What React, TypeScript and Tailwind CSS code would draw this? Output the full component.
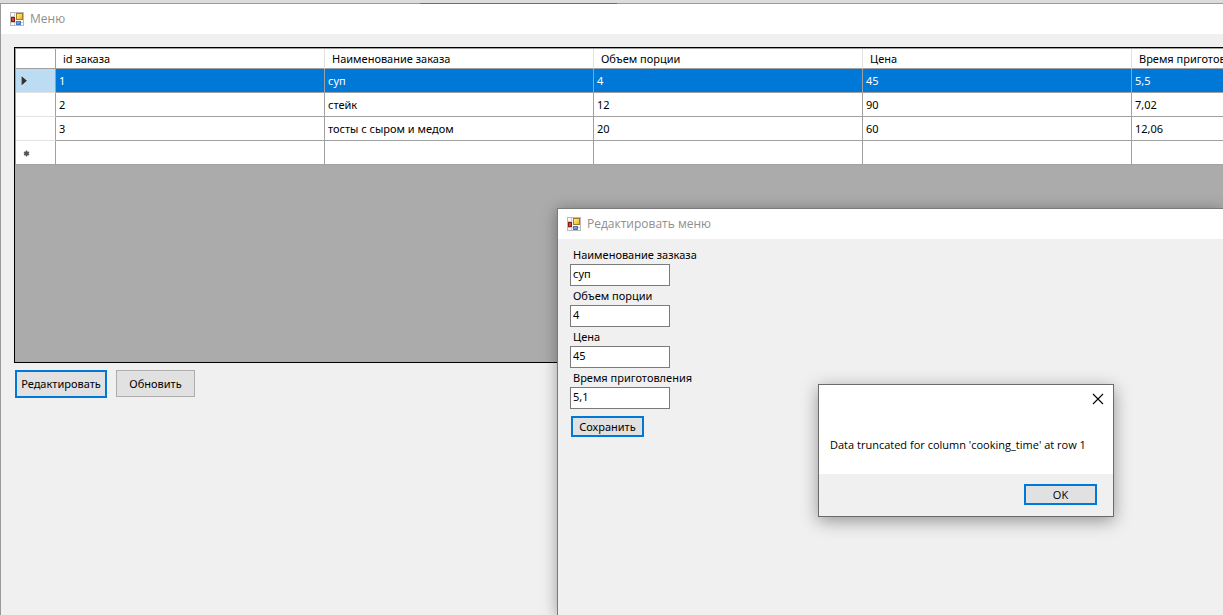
import React, { useId } from "react";

type Column = { key: string; title: string };
type Row = { id: string; name: string; portion: string; price: string; time: string };

const columns: Column[] = [
  { key: "id", title: "id заказа" },
  { key: "name", title: "Наименование заказа" },
  { key: "portion", title: "Объем порции" },
  { key: "price", title: "Цена" },
  { key: "time", title: "Время приготовления" },
];

const rows: Row[] = [
  { id: "1", name: "суп", portion: "4", price: "45", time: "5,5" },
  { id: "2", name: "стейк", portion: "12", price: "90", time: "7,02" },
  { id: "3", name: "тосты с сыром и медом", portion: "20", price: "60", time: "12,06" },
];

const fields = [
  { label: "Наименование зазказа", value: "суп" },
  { label: "Объем порции", value: "4" },
  { label: "Цена", value: "45" },
  { label: "Время приготовления", value: "5,1" },
];

function FormIcon() {
  const id = useId();
  return (
    <svg className="size-[14px] shrink-0" viewBox="0 0 14 14" aria-hidden="true">
      <defs>
        <linearGradient id={`${id}y`} x1="0" y1="0" x2="1" y2="1">
          <stop offset="0" stopColor="#fff3a8" />
          <stop offset="1" stopColor="#eab010" />
        </linearGradient>
        <linearGradient id={`${id}b`} x1="0" y1="0" x2="1" y2="1">
          <stop offset="0" stopColor="#9cc4f6" />
          <stop offset="1" stopColor="#3a72d0" />
        </linearGradient>
      </defs>
      <rect x="0.5" y="0.5" width="13" height="13" fill="#fafafa" stroke="#b9b9b9" />
      <path d="M4.500 1v12M1 4.500h4M1 10.500h12" stroke="#c8c8c8" fill="none" />
      <rect x="6.500" y="1.500" width="6" height="6" fill={`url(#${id}y)`} stroke="#a87c18" />
      <rect x="1.500" y="5.500" width="3" height="4" fill="#d8432f" stroke="#8c1a14" />
      <rect x="6.500" y="9.500" width="4" height="3" fill={`url(#${id}b)`} stroke="#4a78c0" />
    </svg>
  );
}

function TitleBar({ title }: { title: string }) {
  return (
    <header className="flex h-[30px] items-center gap-1.5 bg-white pl-[9px] font-['Open_Sans',sans-serif] text-xs text-[#8f8f8f]">
      <FormIcon />
      <h1>{title}</h1>
    </header>
  );
}

function OrdersGrid() {
  return (
    <div className="h-[316px] overflow-hidden border-y border-l border-black bg-[#ababab]">
      <table className="w-[1386px] table-fixed border-separate border-spacing-0 border-t border-l border-[#a0a0a0] bg-white text-left">
        <colgroup>
          <col className="w-[40px]" />
          {columns.map((c) => (
            <col key={c.key} className="w-[269px]" />
          ))}
        </colgroup>
        <thead>
          <tr className="h-5">
            <th className="border-r border-b border-[#a0a0a0] p-0" aria-label="Строка" />
            {columns.map((c) => (
              <th
                key={c.key}
                className="border-r border-b border-r-[#e2e2e2] border-b-[#a0a0a0] py-0 pl-[7px] font-normal"
              >
                {c.title}
              </th>
            ))}
          </tr>
        </thead>
        <tbody>
          {rows.map((row, i) => (
            <tr key={row.id} className={i === 0 ? "h-6 bg-[#0078d7] text-white" : "h-6"}>
              <th
                className={
                  i === 0
                    ? "border-r border-b border-r-[#a0a0a0] border-b-[#e2e2e2] bg-[#bcdcf4] p-0"
                    : "border-r border-b border-r-[#a0a0a0] border-b-[#e2e2e2] p-0"
                }
                aria-label={row.id}
              >
                {i === 0 && (
                  <svg className="ml-[4px] h-[11px] w-[8px]" viewBox="0 0 8 11" aria-hidden="true">
                    <path d="M1.500 1v9.500l5.500-4.750z" fill="#333" stroke="#fff" strokeWidth="1" paintOrder="stroke" />
                  </svg>
                )}
              </th>
              {[row.id, row.name, row.portion, row.price, row.time].map((v, j) => (
                <td key={columns[j].key} className="border-r border-b border-[#a0a0a0] py-0 pl-[3px]">
                  {v}
                </td>
              ))}
            </tr>
          ))}
          <tr className="h-6">
            <th className="border-r border-b border-r-[#a0a0a0] border-b-[#a0a0a0] p-0 pt-0.5" aria-label="Новая строка">
              <svg className="ml-[7px] size-[7px]" viewBox="0 0 7 7" aria-hidden="true">
                <circle cx="3.500" cy="3.500" r="2.200" fill="#555" />
                <path
                  d="M3.500 0.500v6M0.900 2l5.200 3M6.100 2l-5.200 3"
                  stroke="#555"
                  strokeWidth="1.200"
                  fill="none"
                />
              </svg>
            </th>
            {columns.map((c) => (
              <td key={c.key} className="border-r border-b border-[#a0a0a0] p-0" />
            ))}
          </tr>
        </tbody>
      </table>
    </div>
  );
}

function EditWindow() {
  return (
    <section className="absolute top-[208px] right-0 bottom-0 left-[557px] border-t border-l border-[#7a7a7a] bg-[#f0f0f0] shadow-[0_2px_14px_rgba(0,0,0,0.35)]">
      <TitleBar title="Редактировать меню" />
      <form className="flex flex-col items-start gap-0.5 pt-2 pl-3" onSubmit={(e) => e.preventDefault()}>
        {fields.map((f, i) => (
          <div key={f.label} className="flex flex-col gap-px">
            <label htmlFor={`field-${i}`} className="pl-[3px]">
              {f.label}
            </label>
            <input
              id={`field-${i}`}
              defaultValue={f.value}
              className="h-[22px] w-[100px] border border-[#7a7a7a] bg-white px-0.5 pb-[3px] outline-none"
            />
          </div>
        ))}
        <button
          type="submit"
          className="mt-[5px] ml-px h-[21px] w-[73px] border-2 border-[#0078d7] bg-[#e1e1e1] leading-4"
        >
          Сохранить
        </button>
      </form>
    </section>
  );
}

function MessageBox() {
  return (
    <div
      role="alertdialog"
      aria-describedby="message"
      className="absolute top-[384px] left-[818px] flex w-[296px] flex-col border border-[#6a6a6a] bg-white font-['Open_Sans',sans-serif] shadow-[0_4px_16px_rgba(0,0,0,0.38)]"
    >
      <button type="button" aria-label="Закрыть" className="mt-[8px] mr-[9px] self-end">
        <svg className="size-3" viewBox="0 0 12 12" aria-hidden="true">
          <path d="M1 1l10 10M11 1L1 11" stroke="#000" strokeWidth="1.100" fill="none" />
        </svg>
      </button>
      <p id="message" className="px-[11px] pt-8 pb-[21px]">
        Data truncated for column 'cooking_time' at row 1
      </p>
      <div className="flex justify-end bg-[#f0f0f0] pt-[10px] pr-4 pb-[11px]">
        <button type="button" className="h-[21px] w-[73px] border-2 border-[#0078d7] bg-[#e1e1e1] leading-4">
          OK
        </button>
      </div>
    </div>
  );
}

export default function App() {
  return (
    <div className="relative flex min-h-screen flex-col overflow-hidden bg-[#dcdcdc] pt-[3px] font-['Noto_Sans','Open_Sans',sans-serif] text-[11px] leading-4 text-black">
      <main className="flex grow flex-col border-t border-l border-[#9a9a9a] bg-[#f0f0f0]">
        <TitleBar title="Меню" />
        <div className="flex flex-col gap-[7px] pt-[13px] pl-[13px]">
          <OrdersGrid />
          <div className="flex items-start gap-[9px] pl-px">
            <button type="button" className="h-7 w-[92px] border-2 border-[#0078d7] bg-[#e1e1e1]">
              Редактировать
            </button>
            <button type="button" className="h-[27px] w-[79px] border border-[#adadad] bg-[#e1e1e1]">
              Обновить
            </button>
          </div>
        </div>
      </main>
      <div className="absolute top-[3px] left-[420px] h-px w-[197px] bg-[#6e6e6e]" />
      <EditWindow />
      <MessageBox />
    </div>
  );
}
